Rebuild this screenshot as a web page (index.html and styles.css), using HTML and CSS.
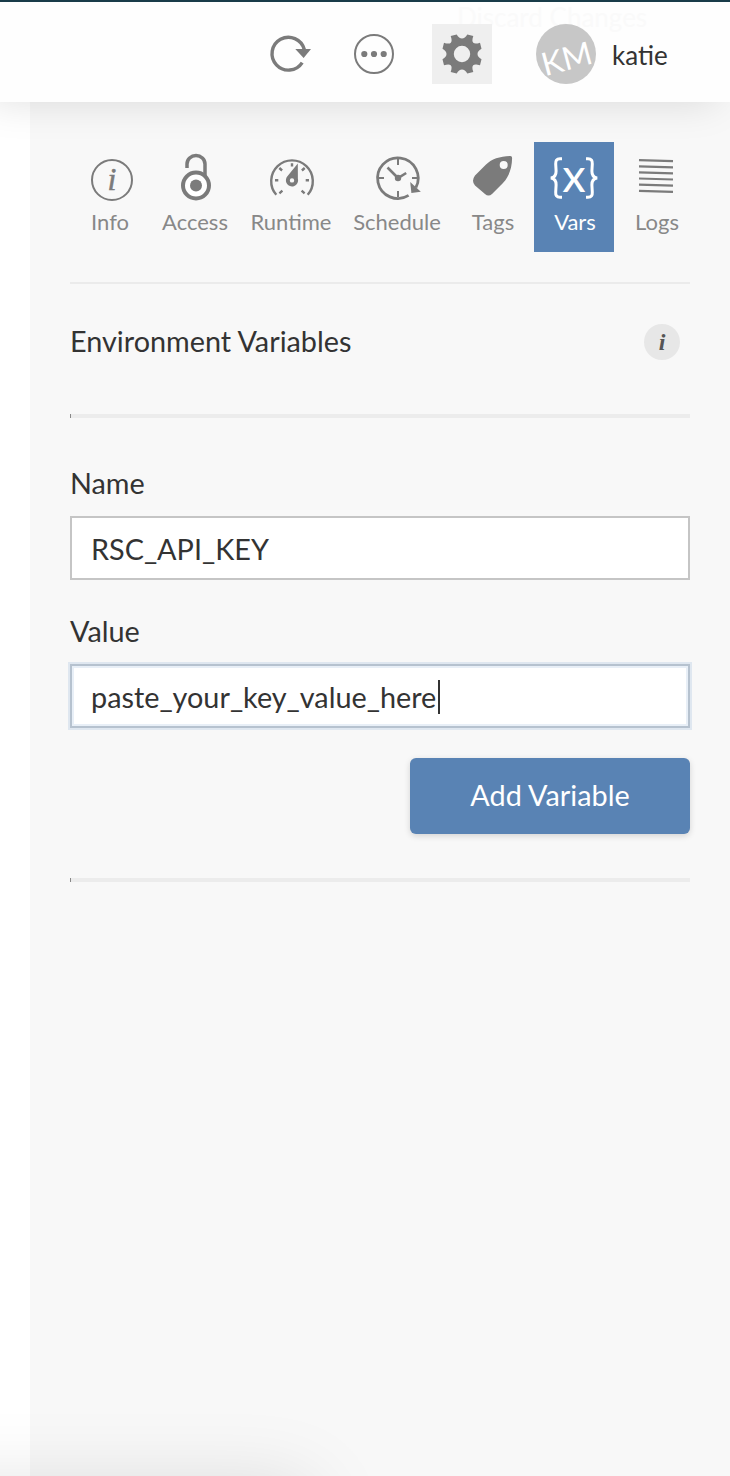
FILE: index.html
```html
<!DOCTYPE html>
<html lang="en">
<head>
<meta charset="utf-8">
<title>Environment Variables</title>
<link rel="stylesheet" href="styles.css">
</head>
<body>
<div class="app">
  <header class="toolbar">
    <span class="ghost-label" aria-hidden="true">Discard Changes</span>
    <button class="tool" aria-label="Refresh">
      <svg width="60" height="60" viewBox="258 24 60 60"><path d="M304.3 49.5A16.4 16.4 0 1 0 302.2 62.6" fill="none" stroke="#7b7b7b" stroke-width="3.4"/><path d="M295.3 49.1H311L303.6 58z" fill="#7b7b7b"/></svg>
    </button>
    <button class="tool" aria-label="More">
      <svg width="60" height="60" viewBox="344 24 60 60"><circle cx="374" cy="54" r="19" fill="none" stroke="#7b7b7b" stroke-width="2"/><g fill="#7b7b7b"><circle cx="364.3" cy="54" r="3.1"/><circle cx="374" cy="54" r="3.1"/><circle cx="383.7" cy="54" r="3.1"/></g></svg>
    </button>
    <button class="tool tool-active" aria-label="Settings">
      <svg width="60" height="60" viewBox="-30 -30 60 60"><path fill="#7b7b7b" fill-rule="evenodd" d="M-11.3-18L-5.3-19.5C-3.8-16.8-2-15.5 0-15.5S3.8-16.8 5.3-19.5L11.3-18C10-14.2 10.2-12.2 11.3-11.2S14.4-10 18-11.3L19.5-5.3C16.8-3.8 15.5-2 15.5 0S16.8 3.8 19.5 5.3L18 11.3C14.2 10 12.2 10.2 11.2 11.3S10 14.4 11.3 18L5.3 19.5C3.8 16.8 2 15.5 0 15.5S-3.8 16.8-5.3 19.5L-11.3 18C-10 14.2-10.2 12.2-11.3 11.2S-14.4 10-18 11.3L-19.5 5.3C-16.8 3.8-15.5 2-15.5 0S-16.8-3.8-19.5-5.3L-18-11.3C-14.2-10-12.2-10.2-11.2-11.3S-10-14.4-11.3-18zM0-8.2A8.2 8.2 0 1 0 0 8.2 8.2 8.2 0 1 0 0-8.2z"/></svg>
    </button>
    <div class="user"><span class="avatar"><span class="initials">KM</span></span><span class="username">katie</span></div>
  </header>
  <main class="panel">
    <nav class="tabs">
      <a class="tab"><svg class="icon icon-info" viewBox="82 150 60 56"><circle cx="112" cy="180" r="20" fill="none" stroke="#7b7b7b" stroke-width="2"/><text class="info-glyph" x="112" y="189.7" text-anchor="middle">i</text></svg>Info</a>
      <a class="tab"><svg class="icon icon-right" viewBox="166 150 60 56"><path d="M187 168V164A9 8.5 0 0 1 205 164V178" fill="none" stroke="#7b7b7b" stroke-width="3.5"/><circle cx="196" cy="185.5" r="13" fill="#fff" stroke="#7b7b7b" stroke-width="4"/><circle cx="196" cy="185.5" r="6" fill="#7b7b7b"/></svg>Access</a>
      <a class="tab"><svg class="icon icon-right" viewBox="262 150 60 56"><g fill="none" stroke="#7b7b7b" stroke-width="2.4"><path d="M276.3 194.8A20.8 20.8 0 1 1 307.7 194.8"/><path d="M292 163.3v3.2M275 180.3h3.3M305.7 180.3h3.3M279.3 168l2.8 2.5M304.7 168l-2.8 2.5M279.4 193.3l3-2.6M304.6 193.3l-3-2.6"/></g><path fill="#7b7b7b" fill-rule="evenodd" d="M297.8 163.5L297.9 178.8A6.1 6.1 0 1 1 287.2 176.6zM292 178.2a2.2 2.2 0 1 0 0 4.4 2.2 2.2 0 1 0 0-4.4z"/></svg>Runtime</a>
      <a class="tab"><svg class="icon icon-right" viewBox="368 150 60 56"><path d="M415.9 187.5A20.3 20.3 0 1 0 408.6 195.4" fill="none" stroke="#7b7b7b" stroke-width="2.8"/><path d="M398 159v6M398 191v6M378 178h6M412 178h6" stroke="#7b7b7b" stroke-width="2"/><path d="M387.5 167.5L398 178l8.2-5" fill="none" stroke="#7b7b7b" stroke-width="2.6"/><circle cx="398" cy="178" r="3.2" fill="#7b7b7b"/><path d="M410.2 182L420.8 191.7 411.4 193z" fill="#7b7b7b"/></svg>Schedule</a>
      <a class="tab"><svg class="icon" viewBox="463 150 60 56"><path fill="#7b7b7b" fill-rule="evenodd" d="M475 175.5L485.5 165C491.5 159 500 156.2 510.3 156Q512.2 156 512.1 158C512 168 509 176.5 503 183L492 194Q488.5 197 485 194L475 185.5Q471 181 475 175.5zM503.7 161a4 4 0 1 0 0 8 4 4 0 1 0 0-8z"/></svg>Tags</a>
      <a class="tab tab-selected"><svg class="icon" viewBox="544 150 60 56"><path d="M562 158.7H560C556.5 158.7 555.5 160.5 555.7 164L556.1 171C556.2 175 554.5 177.5 550.8 178C554.5 178.5 556.2 181 556.1 185L555.7 192C555.5 195.5 556.5 197.3 560 197.3H562M586 158.7H588C591.5 158.7 592.5 160.5 592.3 164L591.9 171C591.8 175 593.5 177.5 597.2 178C593.5 178.5 591.8 181 591.9 185L592.3 192C592.5 195.5 591.5 197.3 588 197.3H586" fill="none" stroke="#fff" stroke-width="3"/><text class="var-glyph" x="574" y="192" text-anchor="middle">x</text></svg><span class="label">Vars</span></a>
      <a class="tab"><svg class="icon icon-left" viewBox="626 150 60 56"><path d="M639 160.1l34 1M639 166.3l34 1M639 172.4l34 1M639 178.5l34 1M639 184.7l34 1M639 190.8l34 1" stroke="#7b7b7b" stroke-width="2.2"/></svg>Logs</a>
    </nav>
    <section class="heading">
      <h1>Environment Variables</h1>
      <svg class="help" width="36" height="36" viewBox="0 0 36 36"><circle cx="18" cy="18" r="18" fill="#e7e7e7"/><text class="help-glyph" x="18" y="26" text-anchor="middle">i</text></svg>
    </section>
    <form class="variable-form">
      <label class="field">Name<span class="input">RSC_API_KEY</span></label>
      <label class="field">Value<span class="input input-focus">paste_your_key_value_here<i class="caret"></i></span></label>
      <button class="submit" type="button">Add Variable</button>
    </form>
    <div class="list-end"></div>
  </main>
  <div class="corner-shadow"></div>
</div>
</body>
</html>
```
FILE: styles.css
```css
* { box-sizing: border-box; }
body { margin: 0; background: #fff; color: #333; font-family: Lato, sans-serif; font-size: 28.8px; }
.app { width: 730px; height: 1476px; overflow: hidden; position: relative; }
button { border: 0; padding: 0; font: inherit; background: none; }
svg { display: block; flex: none; overflow: visible; }
.toolbar { position: relative; z-index: 1; height: 102px; padding: 22px 0 0 258px; display: flex; border-top: 2px solid #193c49; background: #fefefe; box-shadow: -12px 0 40px rgba(0, 0, 0, .13); }
.ghost-label { position: absolute; left: 457px; top: -1px; font-size: 26px; line-height: 32px; color: #fafafa; }
.tool { width: 60px; height: 60px; margin-right: 26px; }
.tool-active { background: #efefef; margin: 0 44px 0 2px; position: relative; }
.user { display: flex; gap: 16px; align-items: center; height: 60px; font-size: 26px; position: relative; }
.username { padding-top: 1px; }
.avatar { width: 60px; height: 60px; border-radius: 50%; background: #c7c7c7; color: #fff; display: flex; align-items: center; justify-content: center; overflow: hidden; }
.initials { font-size: 32px; transform: rotate(-15deg) translate(-1px, 3px); }
.panel { height: 1374px; margin-left: 30px; padding: 40px 40px 0; background: #f8f8f8; }
.tabs { height: 142px; display: grid; grid-template-columns: 80px 90px 102px 110px 82px 80px 86px; align-items: start; margin-right: -10px; }
.tab { height: 110px; padding-top: 8px; display: flex; flex-direction: column; align-items: center; color: #888; font-size: 22px; line-height: 48px; }
.icon { width: 60px; height: 56px; margin-bottom: -8px; }
.icon-info { margin-left: 4px; }
.icon-right { margin-left: 2px; }
.icon-left { margin-right: 2px; }
.tab-selected { background: #5983b4; color: #fff; }
.label { padding-left: 2px; }
.info-glyph { font: italic 32px "Liberation Serif", serif; fill: #7b7b7b; stroke: #7b7b7b; stroke-width: .5px; }
.var-glyph { font: 47px Lato, sans-serif; fill: #fff; }
.heading { position: relative; height: 136px; padding: 40px 10px 0 0; margin-top: -2px; display: flex; justify-content: space-between; border-top: 2px solid #ebebeb; border-bottom: 4px solid #ececec; }
h1 { margin: -1px 0 0; font-size: 28.8px; font-weight: 400; line-height: 36px; }
.help-glyph { font: italic bold 24px "Liberation Serif", serif; fill: #555; }
.heading::after, .list-end::after { content: ""; position: absolute; left: 0; bottom: -4px; width: 1px; height: 4px; background: #888; }
.variable-form { padding-top: 47px; display: flex; flex-direction: column; }
.field { height: 148px; line-height: 36px; }
.input { display: flex; align-items: center; height: 64px; margin-top: 15px; padding: 2px 19px 0; border: 2px solid #c5c5c5; background: #fff; }
.input-focus { border-color: #b6c2cf; box-shadow: 0 0 0 2px #dfe7f0, inset 0 0 0 2px #e8eff7; }
.caret { width: 2px; height: 34px; margin-left: 2px; background: #333; }
.submit { align-self: flex-end; width: 280px; height: 76px; margin-top: -3px; padding-bottom: 2px; border-radius: 6px; background: #5983b4; color: #fff; box-shadow: 0 2px 6px rgba(0, 0, 0, .15); }
.list-end { position: relative; margin-top: 44px; height: 4px; background: #ececec; }
.list-end::after { bottom: 0; }
.corner-shadow { position: absolute; left: -400px; top: 1486px; width: 710px; height: 100px; box-shadow: 0 0 80px rgba(0, 0, 0, .13); }
```
